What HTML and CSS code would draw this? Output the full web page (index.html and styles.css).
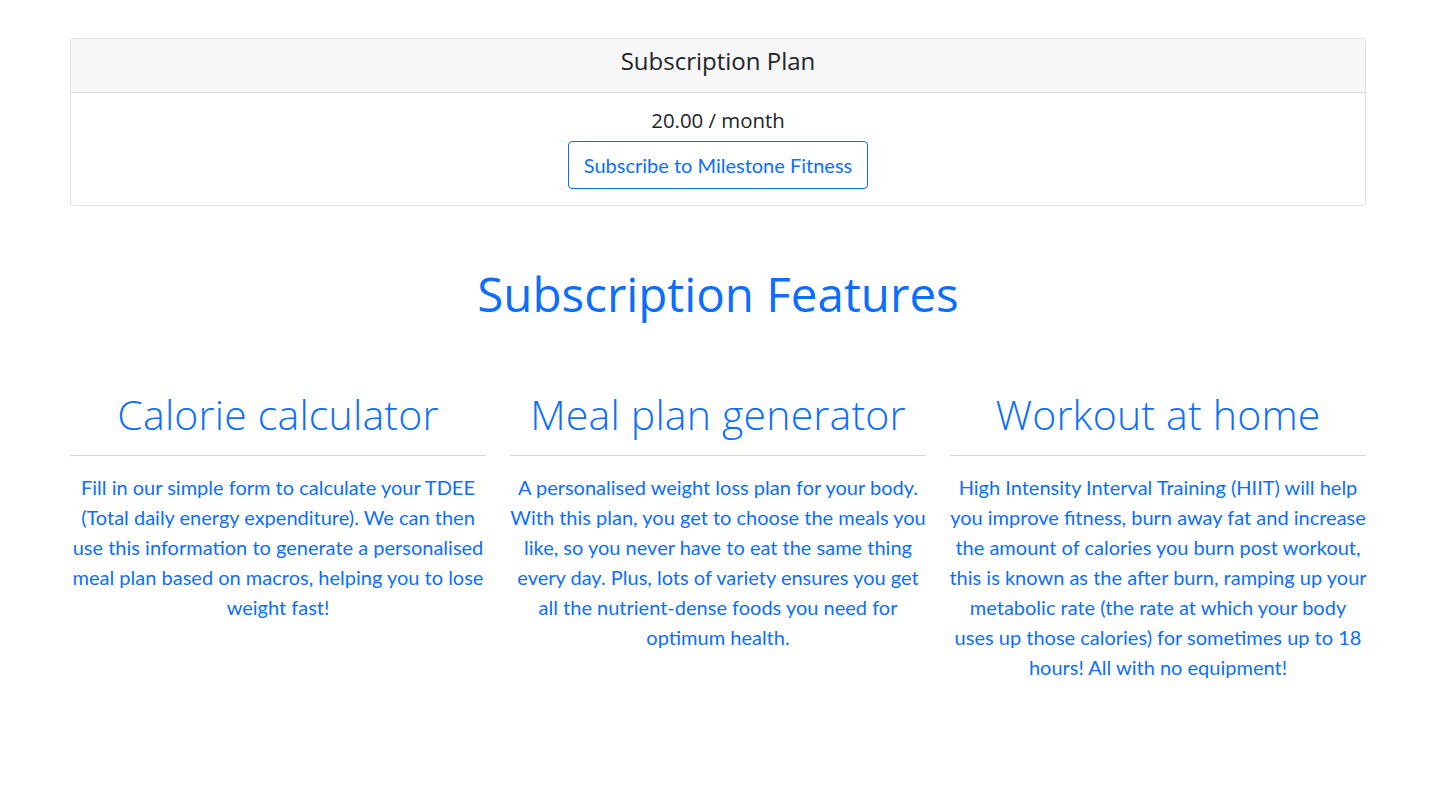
FILE: index.html
```html
<!DOCTYPE html>
<html lang="en">
<head>
<meta charset="utf-8">
<title>Subscription</title>
<link rel="stylesheet" href="styles.css">
</head>
<body>
<main class="container">
  <section class="card">
    <div class="card-header">
      <h4 class="card-title">Subscription Plan</h4>
    </div>
    <div class="card-body">
      <h5 class="price">20.00 / month</h5>
      <button class="btn-outline">Subscribe to Milestone Fitness</button>
    </div>
  </section>

  <h1 class="features-title">Subscription Features</h1>

  <div class="features">
    <div class="feature">
      <h2 class="feature-title">Calorie calculator</h2>
      <hr class="divider">
      <p class="feature-text">Fill in our simple form to calculate your TDEE (Total daily energy expenditure). We can then use this information to generate a personalised meal plan based on macros, helping you to lose weight fast!</p>
    </div>
    <div class="feature">
      <h2 class="feature-title">Meal plan generator</h2>
      <hr class="divider">
      <p class="feature-text">A personalised weight loss plan for your body. With this plan, you get to choose the meals you like, so you never have to eat the same thing every day. Plus, lots of variety ensures you get all the nutrient-dense foods you need for optimum health.</p>
    </div>
    <div class="feature">
      <h2 class="feature-title">Workout at home</h2>
      <hr class="divider">
      <p class="feature-text">High Intensity Interval Training (HIIT) will help you improve fitness, burn away fat and increase the amount of calories you burn post workout, this is known as the after burn, ramping up your metabolic rate (the rate at which your body uses up those calories) for sometimes up to 18 hours! All with no equipment!</p>
    </div>
  </div>
</main>
</body>
</html>
```

FILE: styles.css
```css
* { box-sizing: border-box; }

body {
  margin: 0;
  background: #fff;
  color: #212529;
  font-family: Lato, "Liberation Sans", sans-serif;
}

.container {
  width: 1296px;
  margin-left: 70px;
  padding-top: 38px;
}

.card {
  border: 1px solid rgba(0, 0, 0, 0.125);
  border-radius: 4px;
  text-align: center;
}

.card-header {
  background: #f7f7f7;
  border-bottom: 1px solid rgba(0, 0, 0, 0.125);
  padding: 7px 16px 9px;
  border-radius: 3px 3px 0 0;
}

.card-title {
  margin: 0 0 8px;
  font-family: "Open Sans", sans-serif;
  font-weight: 400;
  font-size: 24px;
  line-height: 29px;
  color: #212529;
}

.card-body {
  padding: 16px;
}

.price {
  margin: 0 0 10px;
  font-family: "Open Sans", sans-serif;
  font-weight: 400;
  font-size: 20.4px;
  line-height: 22px;
  color: #212529;
}

.btn-outline {
  font-family: Lato, sans-serif;
  font-size: 20px;
  line-height: 30px;
  padding: 8px 15px;
  color: #0d6efd;
  background: transparent;
  border: 1px solid #0d6efd;
  border-radius: 4px;
  cursor: pointer;
}

.features-title {
  margin: 59px 0 68px;
  text-align: center;
  font-family: "Open Sans", sans-serif;
  font-weight: 400;
  font-size: 47.5px;
  line-height: 57px;
  color: #0d6efd;
}

.features {
  display: grid;
  grid-template-columns: repeat(3, 1fr);
  gap: 24px;
  text-align: center;
}

.feature-title {
  margin: 0;
  font-family: "Open Sans", sans-serif;
  font-weight: 300;
  font-size: 41px;
  letter-spacing: 0.2px;
  line-height: 49px;
  color: #0d6efd;
}

.divider {
  margin: 16px 0;
  border: 0;
  border-top: 1px solid #0d6efd;
  opacity: 0.25;
}

.feature-text {
  margin: 0 -1px;
  font-size: 20px;
  line-height: 30px;
  color: #0d6efd;
}
```
